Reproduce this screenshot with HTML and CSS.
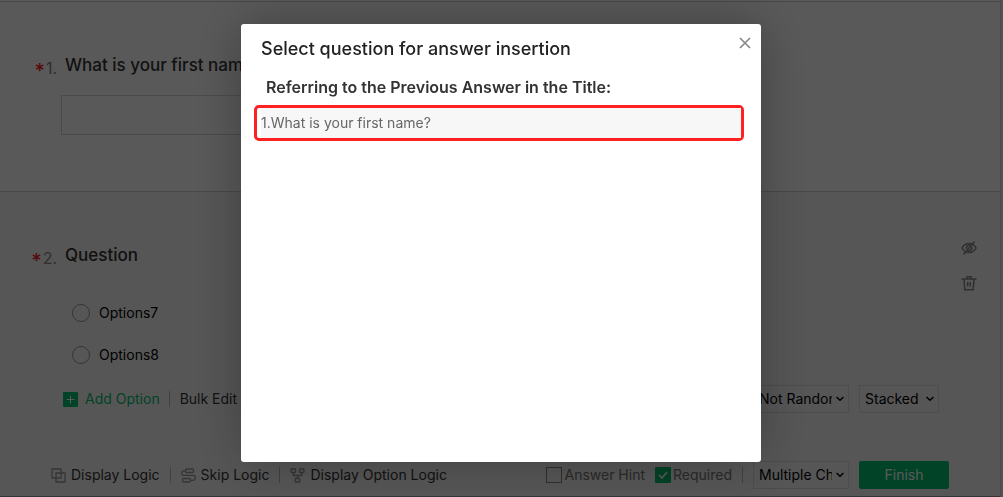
FILE: index.html
```html
<!DOCTYPE html>
<html lang="en">
<head>
<meta charset="utf-8">
<title>Survey editor</title>
<link rel="stylesheet" href="styles.css">
</head>
<body>
<main class="editor">
  <section class="question first">
    <div class="heading">
      <span class="number"><b class="star">*</b>1.</span>
      <h2 class="title" id="q1">What is your first name?</h2>
    </div>
    <input class="answer" type="text" aria-labelledby="q1">
  </section>
  <section class="question second">
    <div class="side-tools">
      <button class="icon-button" aria-label="Hide question">
        <svg width="16" height="16" viewBox="0 0 16 16" fill="none" stroke="currentColor" stroke-width="1.6"><path d="M1 8c3-6 11-6 14 0-3 6-11 6-14 0z"/><path d="M10.500 6.500a3 3 0 0 1-4 4M5.500 9a3 3 0 0 1 4-3.700M13.500 1.500L2.500 14.500"/></svg>
      </button>
      <button class="icon-button" aria-label="Delete question">
        <svg width="16" height="16" viewBox="0 0 16 16" fill="none" stroke="currentColor" stroke-width="1.500"><path d="M.5 4h15M6 3.500V1.700h4v1.800M3 4l.8 10.800h8.400L13 4M6.700 7v4.500M9.300 7v4.500"/></svg>
      </button>
    </div>
    <div class="heading">
      <span class="number"><b class="star">*</b>2.</span>
      <h2 class="title">Question</h2>
    </div>
    <div class="options">
      <label class="option"><input class="radio" type="radio" name="q2">Options7</label>
      <label class="option"><input class="radio" type="radio" name="q2">Options8</label>
    </div>
    <div class="bar option-bar">
      <button class="tool add"><svg width="15" height="15" viewBox="0 0 15 15"><rect width="15" height="15" rx="1" fill="currentColor"/><path d="M7.500 3.500v8M3.500 7.500h8" stroke="#fff"/></svg>Add Option</button>
      <span class="divider"></span>
      <button class="tool">Bulk Edit</button>
      <span class="spacer"></span>
      <select class="select wide" aria-label="Option order"><option>Not Random</option></select>
      <select class="select narrow" aria-label="Option layout"><option>Stacked</option></select>
    </div>
    <div class="bar footer-bar">
      <button class="tool"><svg class="glyph" width="15" height="15" viewBox="0 0 15 15" fill="none" stroke="currentColor" stroke-width="1.300"><path d="M4.500 10H1V1h9v3.500M10 7.500V10H7.500M7.500 5H5v9h9V5h-3.500M5 7.500V10h2.500M7.500 5H10v2.500"/></svg>Display Logic</button>
      <span class="divider"></span>
      <button class="tool"><svg class="glyph" width="15" height="15" viewBox="0 0 15 15" fill="none" stroke="currentColor" stroke-width="1.300"><rect x="4.500" y="1" width="8" height="3.500" rx="1"/><rect x="1.500" y="10.500" width="8" height="3.500" rx="1"/><path d="M4.500 2.800H3a2.200 2.200 0 0 0 0 4.600h9a2.400 2.400 0 0 1 0 4.900H9.500"/></svg>Skip Logic</button>
      <span class="divider"></span>
      <button class="tool"><svg class="glyph" width="15" height="15" viewBox="0 0 15 15" fill="none" stroke="currentColor" stroke-width="1.300"><rect x="1" y="1" width="4.500" height="3.500" rx=".5"/><rect x="9.500" y="1" width="4.500" height="3.500" rx=".5"/><rect x="5.200" y="10.500" width="4.600" height="3.500" rx=".5"/><path d="M3.300 4.500v3h8.400v-3M7.500 7.500v3"/></svg>Display Option Logic</button>
      <span class="spacer"></span>
      <label class="check"><input class="box" type="checkbox">Answer Hint</label>
      <label class="check"><input class="box" type="checkbox" checked>Required</label>
      <span class="divider"></span>
      <select class="select wide" aria-label="Question type"><option>Multiple Choice</option></select>
      <button class="finish">Finish</button>
    </div>
  </section>
</main>
<div class="backdrop">
  <div class="dialog" role="dialog" aria-modal="true" aria-labelledby="dialog-title">
    <header class="dialog-header">
      <h1 class="dialog-title" id="dialog-title">Select question for answer insertion</h1>
      <button class="close" aria-label="Close"><svg width="12" height="12" viewBox="0 0 12 12" stroke="currentColor" stroke-width="1.700"><path d="M1 1l10 10M11 1L1 11"/></svg></button>
    </header>
    <h2 class="dialog-subtitle">Referring to the Previous Answer in the Title:</h2>
    <button class="choice"><span class="choice-text">1.What is your first name?</span></button>
  </div>
</div>
</body>
</html>
```
FILE: styles.css
```css
* { box-sizing: border-box; }
body {
  margin: 0;
  font: 14px/20px Inter, "Liberation Sans", sans-serif;
  color: #333;
  background: #ebebeb;
  height: 100vh;
  overflow: hidden;
}
h1, h2 { margin: 0; }
button, input, select { font: inherit; color: inherit; }
button { padding: 0; border: 0; background: none; }
.editor {
  margin-right: 2px;
  border-right: 1px solid #d5d5d5;
  background: #fff;
  padding-top: 1px;
}
.question { position: relative; border-top: 1px solid #d0d0d0; }
.first { height: 190px; padding-top: 52px; }
.second { background: #f7f7f7; padding-top: 52px; border-bottom: 1px solid #999; }
.heading { display: flex; gap: 8px; line-height: 22px; }
.number { width: 57px; padding-top: 3px; text-align: right; font-size: 16px; color: #888; }
.star { color: #f5222d; font-size: 20px; font-weight: 500; vertical-align: -4px; margin-right: 1px; line-height: 16px; }
.title { font-size: 16px; font-weight: 500; }
.first .title, .second .title { font-size: 17px; }
.answer {
  display: block;
  width: 600px;
  height: 40px;
  margin: 16px 0 0 61px;
  border: 1px solid #d5d5d5;
  background: #fff;
}
.options { display: grid; gap: 22px; padding: 34px 0 0 72px; }
.option { display: flex; align-items: center; gap: 9px; height: 20px; color: #000; }
.radio { appearance: none; width: 18px; height: 18px; margin: 0; border: 1px solid #999; border-radius: 50%; }
.bar { display: flex; align-items: center; }
.option-bar { padding: 20px 61px 0 63px; }
.footer-bar { padding: 48px 51px 7px; }
.tool, .check { height: 28px; }
.tool { display: flex; align-items: center; gap: 5px; white-space: nowrap; }
.add { color: #00bf6f; gap: 7px; }
.glyph { color: #999; }
.divider { width: 1px; height: 16px; margin: 0 10px; background: #bbb; }
.option-bar .divider { margin: 0 10px 0 9px; }
.spacer { flex: 1; }
.select {
  height: 28px;
  padding: 0 16px 0 5px;
  border: 1px solid #dcdcdc;
  appearance: none;
  color: #000;
  background: url("data:image/svg+xml,%3Csvg xmlns='http://www.w3.org/2000/svg' width='8' height='6' fill='none' stroke='black' stroke-width='1.500'%3E%3Cpath d='M.5 1l3.500 3.300 3.500-3.300'/%3E%3C/svg%3E") no-repeat right 4px center #f7f7f7;
}
.wide { width: 96px; }
.narrow { width: 80px; margin-left: 10px; }
.check { display: flex; align-items: center; gap: 2px; margin-right: 10px; color: #777; }
.check + .divider { margin-left: 0; }
.box { appearance: none; width: 16px; height: 16px; margin: 0; border: 1px solid #888; }
.box:checked {
  border: 0;
  border-radius: 1px;
  background: url("data:image/svg+xml,%3Csvg xmlns='http://www.w3.org/2000/svg' width='16' height='16' fill='none' stroke='white' stroke-width='1.700'%3E%3Cpath d='M4 8l3 3 5-6'/%3E%3C/svg%3E") #00bf6f;
}
.finish { width: 90px; height: 28px; margin-left: 10px; border-radius: 2px; background: #00bf6f; color: #fff; }
.side-tools { position: absolute; top: 48px; right: 23px; display: grid; gap: 19px; }
.icon-button { display: block; height: 16px; color: #888; }
.backdrop {
  position: fixed;
  inset: 0;
  display: flex;
  align-items: flex-start;
  justify-content: center;
  padding-top: 24px;
  background: rgba(0, 0, 0, .65);
}
.dialog {
  width: 520px;
  min-height: 438px;
  margin-right: 1px;
  padding: 13px 16px 20px 13px;
  border-radius: 3px;
  background: #fff;
  box-shadow: 0 0 50px rgba(0, 0, 0, .3);
}
.dialog-header { display: flex; justify-content: space-between; padding: 0 0 0 7px; }
.dialog-title { font-size: 18px; line-height: 24px; font-weight: 500; color: #222; }
.close { height: 10px; margin-right: -6px; color: #888; }
.close svg { display: block; }
.dialog-subtitle { margin: 15px 0 7px 12px; font-size: 16px; line-height: 22px; font-weight: 600; }
.choice {
  display: block;
  width: 490px;
  max-width: 100%;
  padding: 0 0 0 4px;
  border: 3px solid #ff2020;
  border-radius: 5px;
  text-align: left;
  color: #666;
}
.choice-text { display: block; line-height: 30px; background: #f7f7f7; }
```
